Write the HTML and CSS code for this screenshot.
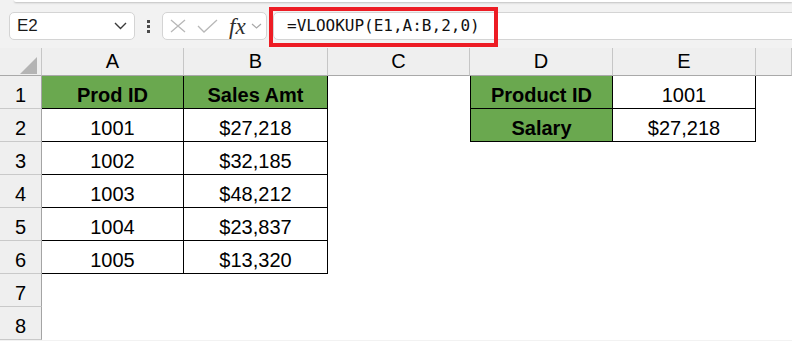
FILE: index.html
```html
<!DOCTYPE html>
<html lang="en">
<head>
    <meta charset="UTF-8">
    <meta name="viewport" content="width=device-width, initial-scale=1.0">
    <title>VLOOKUP</title>
    <link rel="stylesheet" href="styles.css">
</head>
<body>
    <!-- ribbon edge -->
    <div class="ribbon-edge"></div>
    <!-- formula bar -->
    <div class="formula-bar">
        <div class="name-box">
            <span>E2</span>
            <svg width="13" height="8" viewBox="0 0 13 8"><polyline points="1,1 6.5,6.5 12,1" fill="none" stroke="#3a3a3a" stroke-width="1.4"/></svg>
        </div>
        <div class="dots"><i></i><i></i><i></i></div>
        <div class="fx-box">
            <svg class="ico-x" width="16" height="14" viewBox="0 0 16 14"><path d="M1 1L15 13M15 1L1 13" stroke="#b8b8b8" stroke-width="1.3" fill="none"/></svg>
            <svg class="ico-ok" width="21" height="14" viewBox="0 0 21 14"><polyline points="1,7 7,13 20,1" fill="none" stroke="#b8b8b8" stroke-width="1.3"/></svg>
            <span class="fx">fx</span>
            <svg class="ico-down" width="11" height="6" viewBox="0 0 11 6"><polyline points="1,1 5.5,5 10,1" fill="none" stroke="#a8a8a8" stroke-width="1.2"/></svg>
        </div>
        <div class="formula">=VLOOKUP(E1,A:B,2,0)</div>
        <!-- red highlight round the formula -->
        <div class="mark"></div>
    </div>

    <!-- sheet -->
    <div class="sheet">
        <div class="corner"><b></b></div>
        <div class="col-head">A</div>
        <div class="col-head">B</div>
        <div class="col-head">C</div>
        <div class="col-head">D</div>
        <div class="col-head">E</div>
        <div class="col-head"></div>

        <div class="row-head">1</div>
        <div class="cell t head">Prod ID</div>
        <div class="cell t head">Sales Amt</div>
        <div class="cell"></div>
        <div class="cell t head first">Product ID</div>
        <div class="cell t">1001</div>
        <div class="cell"></div>

        <div class="row-head">2</div>
        <div class="cell t">1001</div>
        <div class="cell t">$27,218</div>
        <div class="cell"></div>
        <div class="cell t head first">Salary</div>
        <div class="cell t">$27,218</div>
        <div class="cell"></div>

        <div class="row-head">3</div>
        <div class="cell t">1002</div>
        <div class="cell t">$32,185</div>
        <div class="cell"></div>
        <div class="cell"></div>
        <div class="cell"></div>
        <div class="cell"></div>

        <div class="row-head">4</div>
        <div class="cell t">1003</div>
        <div class="cell t">$48,212</div>
        <div class="cell"></div>
        <div class="cell"></div>
        <div class="cell"></div>
        <div class="cell"></div>

        <div class="row-head">5</div>
        <div class="cell t">1004</div>
        <div class="cell t">$23,837</div>
        <div class="cell"></div>
        <div class="cell"></div>
        <div class="cell"></div>
        <div class="cell"></div>

        <div class="row-head">6</div>
        <div class="cell t">1005</div>
        <div class="cell t">$13,320</div>
        <div class="cell"></div>
        <div class="cell"></div>
        <div class="cell"></div>
        <div class="cell"></div>

        <div class="row-head">7</div>
        <div class="cell"></div>
        <div class="cell"></div>
        <div class="cell"></div>
        <div class="cell"></div>
        <div class="cell"></div>
        <div class="cell"></div>

        <div class="row-head">8</div>
        <div class="cell"></div>
        <div class="cell"></div>
        <div class="cell"></div>
        <div class="cell"></div>
        <div class="cell"></div>
        <div class="cell"></div>
    </div>
</body>
</html>
```

FILE: styles.css
```css
*{
    margin: 0;
    padding: 0;
    box-sizing: border-box;
}
html, body{
    width: 792px;
    height: 341px;
    overflow: hidden;
}
body{
    background-color: #f2f2f2;
    font-family: "Liberation Sans", Arial, sans-serif;
    color: #000;
}
.ribbon-edge{
    height: 2px;
    margin-left: 14px;
    background-color: #fff;
    border-bottom-left-radius: 3px;
    box-shadow: 0 1px 2px rgba(0, 0, 0, 0.22);
}
.formula-bar{
    position: relative;
    display: flex;
    align-items: center;
    padding: 10px 0 8px 9px;
    height: 46px;
}
.name-box{
    width: 126px;
    height: 28px;
    background-color: #fff;
    border: 1px solid #d4d4d4;
    border-radius: 5px;
    display: flex;
    align-items: center;
    justify-content: space-between;
    padding: 0 7px 0 7px;
    font-size: 17px;
    color: #1a1a1a;
}
.dots{
    width: 3px;
    margin: 0 12px;
    display: flex;
    flex-direction: column;
    gap: 2px;
}
.dots i{
    display: block;
    width: 3px;
    height: 3px;
    background-color: #4a4a4a;
}
.fx-box{
    width: 105px;
    height: 28px;
    background-color: #fff;
    border: 1px solid #d4d4d4;
    border-radius: 5px;
    display: flex;
    align-items: center;
    padding-left: 7px;
}
.ico-ok{
    margin-left: 11px;
}
.fx{
    margin-left: 11px;
    font-family: "Liberation Serif", "Times New Roman", serif;
    font-style: italic;
    font-size: 23px;
    color: #2e2e2e;
    line-height: 1;
}
.ico-down{
    margin-left: 5px;
}
.formula{
    flex: 1;
    height: 28px;
    margin-left: 6px;
    margin-right: -6px;
    background-color: #fff;
    border: 1px solid #d4d4d4;
    border-radius: 5px;
    padding-left: 13px;
    font-family: "DejaVu Sans Mono", "Liberation Mono", monospace;
    font-size: 16px;
    line-height: 26px;
    color: #111;
}
/* annotation box over the formula */
.mark{
    position: absolute;
    left: 269px;
    top: 5px;
    width: 229px;
    height: 40px;
    border: 4px solid #ed1c24;
}
.sheet{
    display: grid;
    grid-template-columns: 42px 142px 144px 142px 143px 143px 1fr;
    grid-template-rows: 28px repeat(8, 33px);
    background-color: #fff;
}
.corner, .col-head{
    background-color: #efefef;
    border-bottom: 1px solid #a9a9a9;
    border-right: 1px solid #c6c6c6;
}
.corner{
    position: relative;
}
.corner b{
    position: absolute;
    right: 4px;
    bottom: 1px;
    width: 0;
    height: 0;
    border-left: 17px solid transparent;
    border-bottom: 17px solid #b4b4b4;
}
.col-head{
    font-size: 20px;
    text-align: center;
    line-height: 27px;
}
.row-head{
    background-color: #efefef;
    border-right: 1px solid #a4a4a4;
    border-bottom: 1px solid #c9c9c9;
    font-size: 20px;
    display: flex;
    align-items: flex-end;
    justify-content: center;
    padding-bottom: 1px;
}
.cell{
    font-size: 20px;
    display: flex;
    align-items: flex-end;
    justify-content: center;
    padding-bottom: 1px;
}
.cell.t{
    border-right: 1px solid #000;
    border-bottom: 1px solid #000;
}
.cell.head{
    background-color: #6aa84f;
    font-weight: bold;
}
.cell.first{
    border-left: 1px solid #000;
}
```
